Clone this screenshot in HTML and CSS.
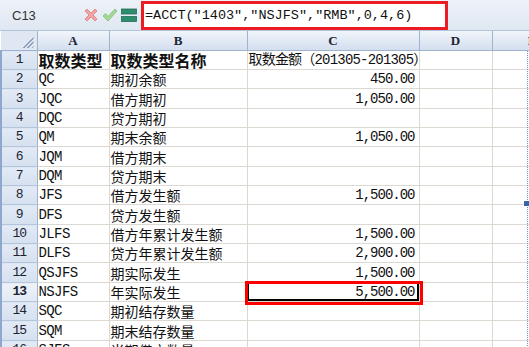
FILE: index.html
```html
<!DOCTYPE html>
<html lang="zh-CN">
<head>
  <meta charset="UTF-8">
  <title>ACCT 取数</title>
  <link rel="stylesheet" href="styles.css">
</head>
<body>

  <div class="fbar">
    <div class="namebox">C13</div>
    <div class="fx-icons">
      <svg width="16" height="16" viewBox="0 0 16 16">
        <path d="M2 4 L4 2 L8 6 L12 2 L14 4 L10 8 L14 12 L12 14 L8 10 L4 14 L2 12 L6 8 Z" fill="#f2a3a3" stroke="#e07a7a" stroke-width="0.8"/>
      </svg>
      <svg width="16" height="16" viewBox="0 0 16 16">
        <path d="M1 9 L3.5 6.5 L6 9.5 L13 2 L15 4 L6 14 Z" fill="#a6d89a" stroke="#7fbf72" stroke-width="0.8"/>
      </svg>
      <svg width="16" height="16" viewBox="0 0 16 16">
        <rect x="0.5" y="2" width="15" height="5" fill="#2f8c6c" stroke="#1f6f55" stroke-width="0.8"/>
        <rect x="0.5" y="9.5" width="15" height="5" fill="#2f8c6c" stroke="#1f6f55" stroke-width="0.8"/>
      </svg>
    </div>
    <div class="formula">=ACCT("1403","NSJFS","RMB",0,4,6)</div>
  </div>

  <div class="sheet">
    <table class="grid">
      <colgroup>
        <col style="width:36px">
        <col style="width:72px">
        <col style="width:138px">
        <col style="width:172px">
        <col style="width:73px">
        <col style="width:80px">
      </colgroup>
      <thead>
        <tr>
          <th class="corner"><span class="tri"></span></th>
          <th>A</th>
          <th>B</th>
          <th>C</th>
          <th>D</th>
          <th>E</th>
        </tr>
      </thead>
      <tbody>
        <tr class="title"><td class="rh">1</td><td class="zh b">取数类型</td><td class="zh b">取数类型名称</td><td class="small">取数金额（201305-201305）</td><td></td><td></td></tr>
        <tr><td class="rh">2</td><td class="code">QC</td><td class="zh">期初余额</td><td class="num">450.00</td><td></td><td></td></tr>
        <tr><td class="rh">3</td><td class="code">JQC</td><td class="zh">借方期初</td><td class="num">1,050.00</td><td></td><td></td></tr>
        <tr><td class="rh">4</td><td class="code">DQC</td><td class="zh">贷方期初</td><td class="num"></td><td></td><td></td></tr>
        <tr><td class="rh">5</td><td class="code">QM</td><td class="zh">期末余额</td><td class="num">1,050.00</td><td></td><td></td></tr>
        <tr><td class="rh">6</td><td class="code">JQM</td><td class="zh">借方期末</td><td class="num"></td><td></td><td></td></tr>
        <tr><td class="rh">7</td><td class="code">DQM</td><td class="zh">贷方期末</td><td class="num"></td><td></td><td></td></tr>
        <tr><td class="rh">8</td><td class="code">JFS</td><td class="zh">借方发生额</td><td class="num">1,500.00</td><td></td><td></td></tr>
        <tr><td class="rh">9</td><td class="code">DFS</td><td class="zh">贷方发生额</td><td class="num"></td><td></td><td></td></tr>
        <tr><td class="rh">10</td><td class="code">JLFS</td><td class="zh">借方年累计发生额</td><td class="num">1,500.00</td><td></td><td></td></tr>
        <tr><td class="rh">11</td><td class="code">DLFS</td><td class="zh">贷方年累计发生额</td><td class="num">2,900.00</td><td></td><td></td></tr>
        <tr><td class="rh">12</td><td class="code">QSJFS</td><td class="zh">期实际发生</td><td class="num">1,500.00</td><td></td><td></td></tr>
        <tr><td class="rh cur">13</td><td class="code">NSJFS</td><td class="zh">年实际发生</td><td class="num active">5,500.00</td><td></td><td></td></tr>
        <tr><td class="rh">14</td><td class="code">SQC</td><td class="zh">期初结存数量</td><td class="num"></td><td></td><td></td></tr>
        <tr><td class="rh">15</td><td class="code">SQM</td><td class="zh">期末结存数量</td><td class="num"></td><td></td><td></td></tr>
        <tr><td class="rh">16</td><td class="code">SJFS</td><td class="zh">当期借方数量</td><td class="num"></td><td></td><td></td></tr>
      </tbody>
    </table>
    <div class="mark"></div>
    <div class="edge"></div>
    <div class="edge-dot"></div>
  </div>

</body>
</html>
```

FILE: styles.css
```css
body {
  margin: 0;
  background: #fff;
  overflow: hidden;
  font-family: "Liberation Mono", "Noto Sans CJK SC", monospace;
  color: #111;
}
.fbar {
  height: 31px;
  box-sizing: border-box;
  display: flex;
  align-items: center;
  background: linear-gradient(#eef2f8, #dfe7f2);
  border-bottom: 1px solid #b3c3d9;
}
.namebox {
  width: 71px;
  padding-left: 12px;
  font: 13px "Liberation Sans", Arial, sans-serif;
  color: #333;
}
.fx-icons {
  display: flex;
  gap: 3px;
  align-items: center;
}
.fx-icons svg {
  display: block;
}
.formula {
  margin-left: 4px;
  margin-top: 1px;
  width: 307px;
  height: 29px;
  box-sizing: border-box;
  border: 3px solid #ec1c24;
  background: #fff;
  padding-left: 1px;
  font: 13.5px "Liberation Mono", monospace;
  line-height: 23px;
  color: #111;
  white-space: nowrap;
}
.sheet {
  position: relative;
  width: 529px;
  overflow: hidden;
}
.grid {
  border-collapse: collapse;
  table-layout: fixed;
  width: 571px;
}
.grid th {
  height: 19px;
  padding: 0;
  background: linear-gradient(#f1f5fb, #d3deee);
  border-right: 1px solid #9fb3cc;
  border-bottom: 1px solid #9fb3cc;
  font: bold 13px "Liberation Serif", serif;
  color: #1b2433;
  text-align: center;
}
.grid th.corner {
  position: relative;
  background: #dfe7f3;
}
.tri {
  position: absolute;
  right: 3px;
  bottom: 2px;
  width: 12px;
  height: 12px;
  background: repeating-linear-gradient(135deg, #8d9fb8 0 1px, #dfe7f3 1px 3px);
  clip-path: polygon(100% 0, 100% 100%, 0 100%);
}
.grid td {
  height: 18px;
  padding: 0 1px;
  border: 1px solid #dcd9d2;
  white-space: nowrap;
  overflow: hidden;
  font-size: 14px;
  line-height: 18px;
}
.grid tbody tr:nth-child(3n) td {
  height: 19px;
}
.grid td.rh {
  padding: 0;
  background: linear-gradient(#e2eaf5, #d5e0ef);
  border-left: 2px solid #8ea7cc;
  border-right: 1px solid #9fb3cc;
  border-bottom: 1px solid #b4c5dc;
  border-top: 1px solid #f3f6fb;
  text-align: center;
  font-size: 13px;
  letter-spacing: -1px;
  color: #1b2433;
}
.grid td.rh.cur {
  background: linear-gradient(#edf2f9, #e2e9f4);
  font-weight: bold;
}
.code {
  letter-spacing: -0.6px;
}
.zh {
  font-family: "Noto Sans CJK SC", sans-serif;
  font-size: 15px;
}
.zh.b {
  font-size: 16px;
  font-weight: bold;
}
.small {
  font-size: 13px;
  letter-spacing: -0.8px;
}
.num {
  text-align: right;
  font-size: 13px;
  letter-spacing: -1px;
  padding-right: 4px !important;
}
.active {
  box-shadow: inset -2px -2px 0 #000, inset 1px 1px 0 #000;
}
.mark {
  position: absolute;
  left: 245px;
  top: 250px;
  width: 178px;
  height: 24px;
  box-sizing: border-box;
  border: 3px solid #f00;
}
.edge {
  position: absolute;
  left: 527px;
  top: 20px;
  width: 0;
  bottom: 0;
  border-left: 1px dotted #6f8fc6;
}
.edge-dot {
  position: absolute;
  left: 524px;
  top: 170px;
  width: 5px;
  height: 5px;
  background: #3c64ad;
}
```
